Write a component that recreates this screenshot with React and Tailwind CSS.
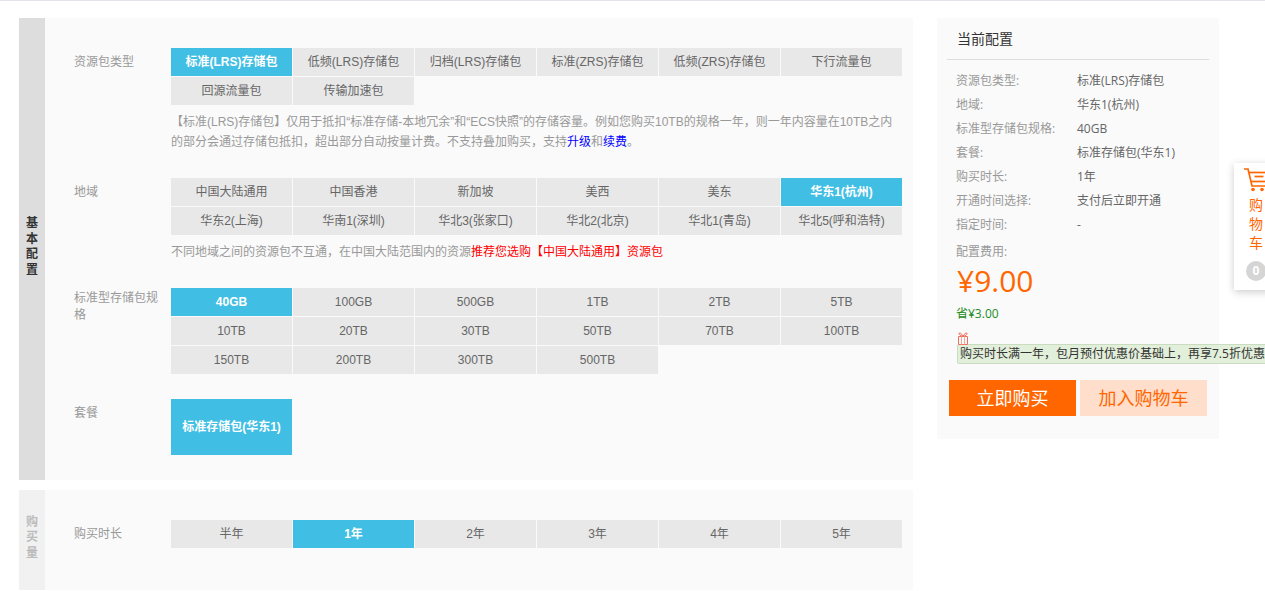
import React from "react";

const FONT = "font-['Open_Sans','Noto_Sans_CJK_SC',sans-serif]";
const ARIAL = "font-['Liberation_Sans','Noto_Sans_CJK_SC',sans-serif]";
const COMMA = "\uFF0C";

function Cell({ label, on, tall }) {
  return (
    <div
      className={`flex items-center justify-center text-xs ${ARIAL} ${tall ? "h-[56px]" : "h-[28px]"} ${
        on ? "bg-[#41bee3] text-white font-semibold" : "bg-[#e8e8e8] text-[#666]"
      }`}
    >
      {label}
    </div>
  );
}

function Options({ items, active, tall }) {
  return (
    <div className="grid grid-cols-[repeat(6,121px)] gap-px">
      {items.map((t) => (
        <Cell key={t} label={t} on={t === active} tall={tall} />
      ))}
    </div>
  );
}

function Row({ label, wrapped, className = "", children }) {
  return (
    <div className={`flex ${className}`}>
      <div className="w-[126px] shrink-0 pl-[29px] pr-[10px] text-xs leading-[17px]">
        <div className={`text-[#999] ${wrapped ? "pt-px" : "pt-[5px]"}`}>{label}</div>
      </div>
      <div>{children}</div>
    </div>
  );
}

function Panel({ title, strip, titleColor, className = "", children }) {
  return (
    <section className={`flex bg-[#fafafa] ${className}`}>
      <div className={`w-[26px] shrink-0 flex items-center justify-center pb-[6px] ${strip}`}>
        <div className={`w-[12px] text-xs leading-[15.5px] font-semibold text-center ${titleColor}`}>{title}</div>
      </div>
      <div className="flex-1">{children}</div>
    </section>
  );
}

const summary = [
  ["资源包类型:", "标准(LRS)存储包"],
  ["地域:", "华东1(杭州)"],
  ["标准型存储包规格:", "40GB"],
  ["套餐:", "标准存储包(华东1)"],
  ["购买时长:", "1年"],
  ["开通时间选择:", "支付后立即开通"],
  ["指定时间:", "-"],
];

export default function App() {
  return (
    <div className={`relative h-[591px] overflow-hidden bg-white ${FONT}`}>
      <div className="h-px bg-[#e1e5eb]" />
      <div className="flex pl-[19px] pt-[17px]">
        <main className="w-[894px] shrink-0 flex flex-col gap-[10px]">
          <Panel title="基本配置" strip="bg-[#dddddd]" titleColor="text-[#333]" className="h-[462px]">
            <div className="pt-[30px]">
              <Row label="资源包类型">
                <Options
                  active="标准(LRS)存储包"
                  items={["标准(LRS)存储包", "低频(LRS)存储包", "归档(LRS)存储包", "标准(ZRS)存储包", "低频(ZRS)存储包", "下行流量包", "回源流量包", "传输加速包"]}
                />
                <p className={`mt-[7px] w-[726px] text-xs leading-[20px] text-[#999] ${ARIAL}`}>
                  {`【标准(LRS)存储包】仅用于抵扣“标准存储-本地冗余”和“ECS快照”的存储容量。例如您购买10TB的规格一年${COMMA}则一年内容量在10TB之内的部分会通过存储包抵扣${COMMA}超出部分自动按量计费。不支持叠加购买${COMMA}支持`}
                  <span className="text-[#0000ff]">升级</span>和<span className="text-[#0000ff]">续费</span>。
                </p>
              </Row>
              <Row label="地域" className="mt-[26px]">
                <Options
                  active="华东1(杭州)"
                  items={["中国大陆通用", "中国香港", "新加坡", "美西", "美东", "华东1(杭州)", "华东2(上海)", "华南1(深圳)", "华北3(张家口)", "华北2(北京)", "华北1(青岛)", "华北5(呼和浩特)"]}
                />
                <p className={`mt-[7px] text-xs leading-[20px] text-[#999] ${ARIAL}`}>
                  {`不同地域之间的资源包不互通${COMMA}在中国大陆范围内的资源`}
                  <span className="text-[#ff0000]">推荐您选购【中国大陆通用】资源包</span>
                </p>
              </Row>
              <Row label="标准型存储包规格" wrapped className="mt-[26px]">
                <Options
                  active="40GB"
                  items={["40GB", "100GB", "500GB", "1TB", "2TB", "5TB", "10TB", "20TB", "30TB", "50TB", "70TB", "100TB", "150TB", "200TB", "300TB", "500TB"]}
                />
              </Row>
              <Row label="套餐" className="mt-[25px]">
                <Options active="标准存储包(华东1)" items={["标准存储包(华东1)"]} tall />
              </Row>
            </div>
          </Panel>
          <Panel title="购买量" strip="bg-[#f1f1f1]" titleColor="text-[#bbb]" className="h-[100px]">
            <div className="pt-[30px]">
              <Row label="购买时长">
                <Options active="1年" items={["半年", "1年", "2年", "3年", "4年", "5年"]} />
              </Row>
            </div>
          </Panel>
        </main>

        <aside className="ml-[24px] w-[282px] h-[421px] shrink-0 bg-[#fafafa] px-[10px]">
          <h2 className="h-[42px] pl-[10px] flex items-center text-sm text-[#333] border-b border-[#dddddd]">当前配置</h2>
          <dl className="mt-[9px] pl-[9px]">
            {summary.map(([k, v]) => (
              <div key={k} className="flex h-[24px] items-center text-xs">
                <dt className="w-[121px] text-[#999]">{k}</dt>
                <dd className="text-[#666]">{v}</dd>
              </div>
            ))}
          </dl>
          <div className="pl-[9px]">
            <div className="mt-[5px] h-[20px] flex items-center text-xs text-[#999]">配置费用:</div>
            <div className="-mt-[3px] pl-px text-[30px] leading-[44px] text-[#ff6600]">¥9.00</div>
            <div className="mt-[2px] text-xs leading-[18px] text-[#228b22]">省¥3.00</div>
            <svg className="mt-[9px] ml-px block" width="12" height="13" viewBox="0 0 12 13" fill="none" stroke="#f0705f" strokeWidth="1">
              <path d="M1.5 4.5h9v8h-9z" />
              <path d="M4.5 4.5v8M7.5 4.5v8" stroke="#f7a89c" />
              <path d="M6 4C4.5 1.5 2.5 .3 2 1.2 1.5 2.5 3.5 4 6 4c2.5 0 4.500-1.500 4-2.800C9.500 .3 7.500 1.500 6 4z" />
            </svg>
          </div>
          <div className="ml-[10px] -mt-[1px] w-[400px] h-[20px] pl-[2px] flex items-center whitespace-nowrap text-xs text-[#333] bg-[#e2efda] border border-[#c9dcc0] rounded-[2px]">
            {`购买时长满一年${COMMA}包月预付优惠价基础上${COMMA}再享7.5折优惠`}
          </div>
          <div className="mt-[16px] ml-[2px] flex gap-[4px]">
            <button className="w-[127px] h-[36px] bg-[#ff6600] text-white text-lg">立即购买</button>
            <button className="w-[127px] h-[36px] bg-[#ffdecb] text-[#ff6600] text-lg">加入购物车</button>
          </div>
        </aside>
      </div>

      <div className="absolute left-[1234px] top-[163px] w-[40px] h-[127px] bg-white shadow-[0_2px_8px_rgba(0,0,0,0.2)] flex flex-col">
        <svg className="ml-[10px] mt-[5px] shrink-0" width="26" height="25" viewBox="0 0 26 25" fill="none" stroke="#ff6600" strokeWidth="1.7">
          <path d="M0 1h4L8 18h18" />
          <path d="M5 4.500h21" />
          <path d="M10.500 8.500h9" />
          <path d="M7 13.500h19" />
          <circle cx="9" cy="21.500" r="1.800" fill="#ff6600" stroke="none" />
          <circle cx="18" cy="21.500" r="1.800" fill="#ff6600" stroke="none" />
        </svg>
        <div className="ml-[15px] mt-[2px] w-[14px] text-sm leading-[19px] text-[#ff6600]">购物车</div>
        <div className="ml-[12px] mt-[9px] w-[20px] h-[20px] rounded-full bg-[#d5d5d5] text-white text-xs font-bold flex items-center justify-center">0</div>
      </div>
    </div>
  );
}
